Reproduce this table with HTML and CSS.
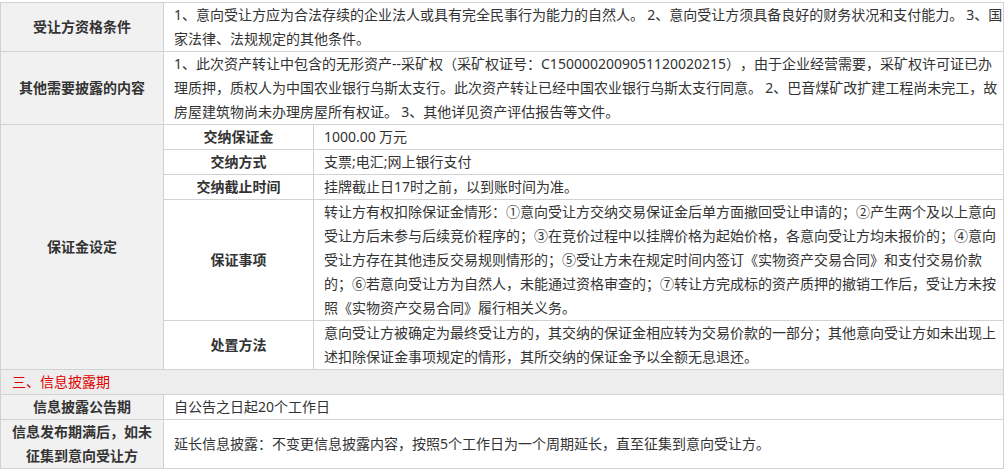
FILE: index.html
```html
<!DOCTYPE html>
<html lang="zh-CN">
<head>
<meta charset="utf-8">
<title>信息披露</title>
<link rel="stylesheet" href="styles.css">
</head>
<body>
<table class="info">
  <colgroup>
    <col class="c-label">
    <col class="c-sub">
    <col class="c-val">
  </colgroup>
  <tr>
    <th class="label">受让方资格条件</th>
    <td class="val" colspan="2">1、意向受让方应为合法存续的企业法人或具有完全民事行为能力的自然人。 2、意向受让方须具备良好的财务状况和支付能力。 3、国家法律、法规规定的其他条件。</td>
  </tr>
  <tr>
    <th class="label">其他需要披露的内容</th>
    <td class="val" colspan="2">1、此次资产转让中包含的无形资产--采矿权（采矿权证号：C1500002009051120020215），由于企业经营需要，采矿权许可证已办理质押，质权人为中国农业银行乌斯太支行。此次资产转让已经中国农业银行乌斯太支行同意。 2、巴音煤矿改扩建工程尚未完工，故房屋建筑物尚未办理房屋所有权证。 3、其他详见资产评估报告等文件。</td>
  </tr>
  <tr>
    <th class="label" rowspan="5">保证金设定</th>
    <th class="sub">交纳保证金</th>
    <td class="val">1000.00 万元</td>
  </tr>
  <tr>
    <th class="sub">交纳方式</th>
    <td class="val">支票;电汇;网上银行支付</td>
  </tr>
  <tr>
    <th class="sub">交纳截止时间</th>
    <td class="val">挂牌截止日17时之前，以到账时间为准。</td>
  </tr>
  <tr>
    <th class="sub">保证事项</th>
    <td class="val">转让方有权扣除保证金情形：①意向受让方交纳交易保证金后单方面撤回受让申请的；②产生两个及以上意向受让方后未参与后续竞价程序的；③在竞价过程中以挂牌价格为起始价格，各意向受让方均未报价的；④意向受让方存在其他违反交易规则情形的；⑤受让方未在规定时间内签订《实物资产交易合同》和支付交易价款的；⑥若意向受让方为自然人，未能通过资格审查的；⑦转让方完成标的资产质押的撤销工作后，受让方未按照《实物资产交易合同》履行相关义务。</td>
  </tr>
  <tr>
    <th class="sub">处置方法</th>
    <td class="val">意向受让方被确定为最终受让方的，其交纳的保证金相应转为交易价款的一部分；其他意向受让方如未出现上述扣除保证金事项规定的情形，其所交纳的保证金予以全额无息退还。</td>
  </tr>
  <tr class="section">
    <td colspan="3">三、信息披露期</td>
  </tr>
  <tr>
    <th class="label">信息披露公告期</th>
    <td class="val" colspan="2">自公告之日起20个工作日</td>
  </tr>
  <tr>
    <th class="label">信息发布期满后，如未征集到意向受让方</th>
    <td class="val" colspan="2">延长信息披露：不变更信息披露内容，按照5个工作日为一个周期延长，直至征集到意向受让方。</td>
  </tr>
</table>
</body>
</html>
```
FILE: styles.css
```css
html, body {
  margin: 0;
  padding: 0;
  background: #ffffff;
}

body {
  padding-top: 2px;
  font-family: "Noto Sans", "Noto Sans CJK SC", sans-serif;
  font-size: 14px;
  color: #333333;
  text-spacing-trim: space-all;
}

.info {
  width: 1004px;
  border-collapse: collapse;
  table-layout: fixed;
}

.c-label { width: 163px; }
.c-sub { width: 150px; }

.info th,
.info td {
  border: 1px solid #d2d2d2;
  line-height: 24px;
  padding: 0;
  vertical-align: middle;
}

.info th {
  font-weight: bold;
  text-align: center;
  color: #333333;
}

.info .label {
  background: #f1f1f1;
  padding: 0 10px;
}

.info .sub {
  background: #ffffff;
  padding: 0 10px;
}

.info .val {
  text-align: left;
  padding: 0 0 0 10px;
  word-spacing: -0.5px;
}

.info .section td {
  background: #ededed;
  color: #e00000;
  padding-left: 11px;
}
```
